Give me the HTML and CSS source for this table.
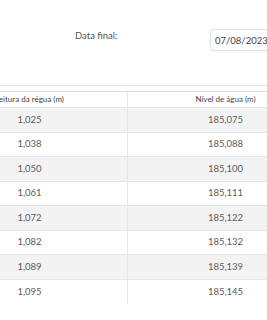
FILE: index.html
```html
<!DOCTYPE html>
<html lang="pt-BR">
<head>
<meta charset="utf-8">
<title>Leituras</title>
<link rel="stylesheet" href="styles.css">
</head>
<body>
<div class="filters">
  <label class="filter-label" for="data-final">Data final:</label>
  <input class="date-input" id="data-final" type="text" value="07/08/2023">
</div>
<div class="divider"></div>
<div class="table-wrap">
  <table class="readings">
    <thead>
      <tr><th>Leitura da régua (m)</th><th>Nível de água (m)</th></tr>
    </thead>
    <tbody>
      <tr><td>1,025</td><td>185,075</td></tr>
      <tr><td>1,038</td><td>185,088</td></tr>
      <tr><td>1,050</td><td>185,100</td></tr>
      <tr><td>1,061</td><td>185,111</td></tr>
      <tr><td>1,072</td><td>185,122</td></tr>
      <tr><td>1,082</td><td>185,132</td></tr>
      <tr><td>1,089</td><td>185,139</td></tr>
      <tr><td>1,095</td><td>185,145</td></tr>
    </tbody>
  </table>
</div>
</body>
</html>
```
FILE: styles.css
```css
html, body {
  margin: 0;
  padding: 0;
  background: #ffffff;
  overflow: hidden;
}
body {
  font-family: Lato, "Liberation Sans", sans-serif;
  color: #5c5c5c;
  width: 267px;
}
.filters {
  display: flex;
  align-items: flex-start;
  padding: 29px 0 0 75px;
  height: 56px;
  box-sizing: border-box;
}
.filter-label {
  width: 135px;
  font-size: 9.5px;
  line-height: 1.2;
  padding-top: 0.5px;
  color: #555555;
  flex: none;
}
.date-input {
  flex: none;
  width: 110px;
  height: 22px;
  box-sizing: border-box;
  margin: 0;
  padding: 0 0 0 4px;
  border: 1px solid #e3e3e3;
  border-radius: 3px;
  font-family: Lato, "Liberation Sans", sans-serif;
  font-size: 9.5px;
  color: #444444;
  background: #ffffff;
  box-shadow: 0 1px 1px rgba(0,0,0,0.04);
  outline: none;
}
.divider {
  height: 1px;
  background: #e6e6e6;
  margin-top: 29px;
}
.table-wrap {
  margin-top: 5px;
  overflow: hidden;
}
.readings {
  margin-left: -68px;
  width: 391px;
  border-collapse: collapse;
  table-layout: fixed;
  border-top: 1px solid #dedede;
}
.readings th,
.readings td {
  width: 50%;
  text-align: center;
  padding: 0;
  border-left: 1px solid #e6e6e6;
}
.readings th:first-child,
.readings td:first-child {
  border-left: none;
}
.readings th {
  height: 15px;
  font-size: 8px;
  font-weight: normal;
  color: #444444;
  line-height: 15px;
}
.readings td {
  height: 24.5px;
  font-size: 9.5px;
  line-height: 12px;
  color: #5c5c5c;
  border-top: 1px solid #e6e6e6;
  box-sizing: border-box;
}
.readings tbody tr:nth-child(odd) td {
  background: #f3f3f3;
}
```
